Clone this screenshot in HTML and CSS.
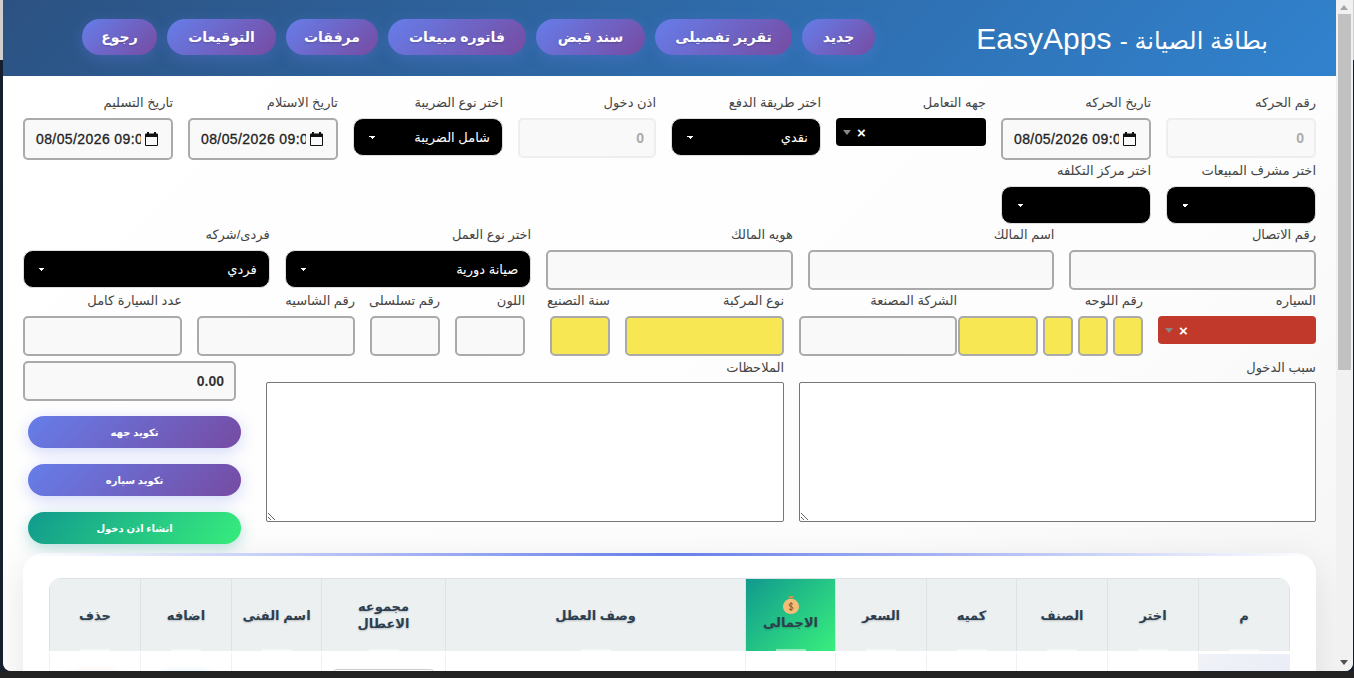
FILE: index.html
```html
<!DOCTYPE html>
<html lang="ar" dir="rtl">
<head>
  <meta charset="UTF-8" />
  <meta name="viewport" content="width=device-width, initial-scale=1.0"/>
  <title>بطاقة الصيانة</title>
  <link rel="stylesheet" href="styles.css">
</head>
<body>
  <div class="window">
    <!-- fake scrollbar, sits first because the page is rtl -->
    <div class="scrollbar">
      <div class="scroll-arrow scroll-up"></div>
      <div class="scroll-thumb"></div>
      <div class="scroll-arrow scroll-down"></div>
    </div>

    <div class="page">
      <div class="header">
        <h1><span class="title-ar">بطاقة الصيانة -</span> EasyApps</h1>
        <div class="header-buttons">
          <button class="nav-button nav-73">جديد</button>
          <button class="nav-button nav-137">تقرير تفصيلى</button>
          <button class="nav-button nav-109">سند قبض</button>
          <button class="nav-button nav-138">فاتوره مبيعات</button>
          <button class="nav-button nav-92">مرفقات</button>
          <button class="nav-button nav-109">التوقيعات</button>
          <button class="nav-button nav-75">رجوع</button>
        </div>
      </div>

      <div class="form">
        <div class="row row-top">
          <div class="field w-150"><label>رقم الحركه</label><input class="text-input is-disabled" value="0" disabled></div>
          <div class="field w-150"><label>تاريخ الحركه</label>
            <div class="date-box">
              <input class="date-text" value="08/05/2026 09:00">
              <svg class="date-icon" width="13" height="14" viewBox="0 0 13 14"><path d="M3 0V2M10 0V2" stroke="#111" stroke-width="2"/><path d="M.5 2H12.500V13.500H.5Z" fill="none" stroke="#111"/><path d="M1 2H12V5H1Z" fill="#111"/></svg>
            </div>
          </div>
          <div class="field w-150"><label>جهه التعامل</label>
            <div class="select2 select2-black"><span class="select2-arrow"></span><span class="select2-clear">×</span></div>
          </div>
          <div class="field w-150"><label>اختر طريقة الدفع</label><select class="black-select"><option>نقدي</option></select></div>
          <div class="field w-138"><label>اذن دخول</label><input class="text-input is-disabled" value="0" disabled></div>
          <div class="field w-150"><label>اختر نوع الضريبة</label><select class="black-select"><option>شامل الضريبة</option></select></div>
          <div class="field w-150"><label>تاريخ الاستلام</label>
            <div class="date-box">
              <input class="date-text" value="08/05/2026 09:00">
              <svg class="date-icon" width="13" height="14" viewBox="0 0 13 14"><path d="M3 0V2M10 0V2" stroke="#111" stroke-width="2"/><path d="M.5 2H12.500V13.500H.5Z" fill="none" stroke="#111"/><path d="M1 2H12V5H1Z" fill="#111"/></svg>
            </div>
          </div>
          <div class="field w-150"><label>تاريخ التسليم</label>
            <div class="date-box">
              <input class="date-text" value="08/05/2026 09:00">
              <svg class="date-icon" width="13" height="14" viewBox="0 0 13 14"><path d="M3 0V2M10 0V2" stroke="#111" stroke-width="2"/><path d="M.5 2H12.500V13.500H.5Z" fill="none" stroke="#111"/><path d="M1 2H12V5H1Z" fill="#111"/></svg>
            </div>
          </div>
        </div>

        <div class="row row-second">
          <div class="field w-150"><label>اختر مشرف المبيعات</label><select class="black-select"><option></option></select></div>
          <div class="field w-150"><label>اختر مركز التكلفه</label><select class="black-select"><option></option></select></div>
        </div>

        <div class="row-five">
          <div class="field"><label>رقم الاتصال</label><input class="text-input"></div>
          <div class="field"><label>اسم المالك</label><input class="text-input"></div>
          <div class="field"><label>هويه المالك</label><input class="text-input"></div>
          <div class="field"><label>اختر نوع العمل</label><select class="black-select"><option>صيانة دورية</option></select></div>
          <div class="field"><label>فردى/شركه</label><select class="black-select"><option>فردي</option></select></div>
        </div>

        <div class="row row-car">
          <div class="field w-158"><label>السياره</label>
            <div class="select2 select2-red"><span class="select2-arrow"></span><span class="select2-clear">×</span></div>
          </div>
          <div class="field"><label>رقم اللوحه</label>
            <div class="plate">
              <input class="text-input is-yellow w-30">
              <input class="text-input is-yellow w-30">
              <input class="text-input is-yellow w-30">
              <input class="text-input is-yellow w-80">
            </div>
          </div>
          <div class="field w-158 no-gap"><label>الشركة المصنعة</label><input class="text-input"></div>
          <div class="field w-159"><label>نوع المركبة</label><input class="text-input is-yellow"></div>
          <div class="field w-60"><label>سنة التصنيع</label><input class="text-input is-yellow"></div>
          <div class="field w-70 after-year"><label>اللون</label><input class="text-input"></div>
          <div class="field w-70"><label>رقم تسلسلى</label><input class="text-input"></div>
          <div class="field w-158"><label>رقم الشاسيه</label><input class="text-input"></div>
          <div class="field w-159"><label>عدد السيارة كامل</label><input class="text-input"></div>
        </div>

        <div class="row-notes">
          <div class="field note-517"><label>سبب الدخول</label><textarea class="note"></textarea></div>
          <div class="field note-518"><label>الملاحظات</label><textarea class="note"></textarea></div>
          <div class="side-col">
            <input class="text-input total-input" value="0.00">
            <button class="side-button">تكويد جهه</button>
            <button class="side-button">تكويد سياره</button>
            <button class="side-button side-button-green">انشاء اذن دخول</button>
          </div>
        </div>
      </div>

      <div class="table-card">
        <table class="parts-table">
          <thead>
            <tr>
              <th class="c-92">م</th>
              <th class="c-91">اختر</th>
              <th class="c-91">الصنف</th>
              <th class="c-90">كميه</th>
              <th class="c-91">السعر</th>
              <th class="c-90 total-head">
                <svg class="money-bag" width="16" height="19" viewBox="0 0 16 19">
                  <path d="M5.500 .5 7 1.500 8 .5 9 1.500 10.500 .5 10 3.500H6Z" fill="#d98f4e"/>
                  <path d="M5.500 4C2.500 5.500 0 8 0 11.500 0 16 3.500 19 8 19S16 16 16 11.500C16 8 13.500 5.500 10.500 4Z" fill="#f5bd78"/>
                  <path d="M10 9.500C9.600 8.800 8.800 8.500 8 8.500 6.900 8.500 6.100 9.100 6.100 10 6.100 12 10.100 11.200 10.100 13.200 10.100 14.200 9.100 14.800 8 14.800 7.100 14.800 6.300 14.400 5.900 13.700M8 7.200V16" fill="none" stroke="#8a5526" stroke-width="1"/>
                </svg>
                <span>الاجمالى</span>
              </th>
              <th class="c-300">وصف العطل</th>
              <th class="c-124">مجموعه<br>الاعطال</th>
              <th class="c-90">اسم الفنى</th>
              <th class="c-91">اضافه</th>
              <th class="c-91">حذف</th>
            </tr>
          </thead>
          <tbody>
            <tr>
              <td class="first-cell"></td><td></td><td></td><td></td><td></td><td></td><td></td>
              <td><div class="cell-select"></div></td>
              <td></td>
              <td><div class="cell-action cell-action-green"></div></td>
              <td><div class="cell-action cell-action-red"></div></td>
            </tr>
          </tbody>
        </table>
      </div>
    </div>
  </div>
</body>
</html>
```

FILE: styles.css
```css
* {
    margin: 0;
    padding: 0;
    box-sizing: border-box;
    font-family: 'Liberation Sans', 'DejaVu Sans', sans-serif;
}

html, body {
    height: 100%;
    overflow: hidden;
}

body {
    background: linear-gradient(#cfcfcf 60px, #14202e 60px, #14202e 670px, #232323 672px);
    padding: 0 1px 7px 3px;
}

.window {
    display: flex;
    height: 100%;
    background-color: #f1f1f1;
    border-radius: 0 0 8px 8px;
    overflow: hidden;
}

.scrollbar {
    flex: 0 0 17px;
    display: flex;
    flex-direction: column;
    background-color: #f1f1f1;
}

.scroll-arrow {
    height: 14px;
    position: relative;
}

.scroll-arrow::after {
    content: "";
    position: absolute;
    left: 4px;
    top: 5px;
    border-left: 4px solid transparent;
    border-right: 4px solid transparent;
}

.scroll-up::after {
    border-bottom: 5px solid #a3a3a3;
}

.scroll-down {
    height: 17px;
}

.scroll-down::after {
    top: 6px;
    border-top: 5px solid #505050;
}

.scroll-thumb {
    height: 356px;
    margin: 0 2px auto;
    background-color: #c1c1c1;
}

.page {
    flex: 1;
    min-width: 0;
    background: linear-gradient(135deg, #ffffff, #fdfdfd 70%, #f5f5f5);
    overflow: hidden;
    border-radius: 0 0 0 8px;
}

/* header */
.header {
    height: 76px;
    display: flex;
    align-items: center;
    justify-content: space-between;
    padding: 0 68px 0 79px;
    background: linear-gradient(135deg, #2c5282, #3182ce);
}

.header h1 {
    padding-top: 2px;
    font-size: 30px;
    font-weight: 400;
    color: white;
}

.title-ar {
    font-size: 24px;
}

.header-buttons {
    display: flex;
    gap: 10px;
    margin-top: -2px;
}

.nav-button {
    height: 36px;
    border: none;
    border-radius: 18px;
    background: linear-gradient(135deg, #667eea, #764ba2);
    box-shadow: 0 4px 15px rgba(102, 126, 234, 0.3);
    color: white;
    font-size: 14px;
    font-weight: 700;
    text-shadow: 0 1px 2px rgba(0, 0, 0, 0.2);
}

.nav-73 { width: 73px; }
.nav-75 { width: 75px; }
.nav-92 { width: 92px; }
.nav-109 { width: 109px; }
.nav-137 { width: 137px; }
.nav-138 { width: 138px; }

/* form */
.form {
    padding: 17px 20px 0 20px;
}

.row {
    display: flex;
    gap: 15px;
}

.row-top {
    height: 68px;
}

.row-second {
    height: 64px;
}

.row-five {
    display: grid;
    grid-template-columns: repeat(5, 1fr);
    gap: 15px;
    height: 66px;
}

.row-car {
    height: 66px;
}

.field {
    display: flex;
    flex-direction: column;
    min-width: 0;
}

.field label {
    height: 25px;
    font-size: 13px;
    line-height: 20px;
    color: #444;
    white-space: nowrap;
}

.w-30 { width: 30px; }
.w-60 { width: 60px; }
.w-70 { width: 70px; }
.w-80 { width: 80px; }
.w-138 { width: 138px; }
.w-150 { width: 150px; }
.w-158 { width: 158px; }
.w-159 { width: 159px; }

.no-gap {
    margin-right: -14px;
}

.after-year {
    margin-right: 10px;
}

.text-input {
    height: 40px;
    padding: 0 10px;
    border: 2px solid #aaa;
    border-radius: 5px;
    background-color: #f9f9f9;
    font-size: 14px;
    font-weight: 700;
    color: #333;
    outline: none;
}

.is-disabled {
    border-color: #eee;
    color: #aaa;
}

.is-yellow {
    background-color: #f7e752;
}

.date-box {
    display: flex;
    direction: ltr;
    align-items: center;
    gap: 4px;
    height: 42px;
    padding: 0 13px 0 11px;
    border: 2px solid #aaa;
    border-radius: 5px;
    background-color: #f9f9f9;
}

.date-text {
    flex: 1;
    min-width: 0;
    border: none;
    outline: none;
    background: none;
    font-size: 14px;
    letter-spacing: 0.4px;
    color: #222;
    -webkit-text-stroke: 0.3px #222;
}

.date-icon {
    flex: 0 0 13px;
}

.black-select {
    appearance: none;
    -webkit-appearance: none;
    width: 100%;
    height: 38px;
    padding: 0 12px;
    border: 1px solid #ddd;
    border-radius: 10px;
    background-color: black;
    background-image: linear-gradient(45deg, transparent 50%, white 50%), linear-gradient(135deg, white 50%, transparent 50%);
    background-position: 15px 17px, 18px 17px;
    background-size: 3px 3px;
    background-repeat: no-repeat;
    color: white;
    font-size: 13px;
    outline: none;
}

.select2 {
    display: flex;
    align-items: center;
    gap: 6px;
    height: 28px;
    padding: 0 7px;
    border-radius: 4px;
    flex-direction: row-reverse;
    justify-content: flex-start;
}

.select2-black {
    background-color: black;
}

.select2-red {
    background-color: #c0392b;
}

.select2-clear {
    color: white;
    font-size: 15px;
    font-weight: 700;
    line-height: 1;
}

.select2-arrow {
    border-left: 4px solid transparent;
    border-right: 4px solid transparent;
    border-top: 5px solid #888;
}

.plate {
    display: flex;
    gap: 5px;
}

.row-notes {
    display: flex;
    gap: 15px;
    align-items: flex-start;
    margin-top: 1px;
}

.note-517 {
    width: 517px;
}

.note-518 {
    width: 518px;
}

.row-notes label {
    height: 24px;
}

.note {
    height: 140px;
    border: 1px solid #767676;
    border-radius: 2px;
    background-color: white;
}

.side-col {
    width: 228px;
    display: flex;
    flex-direction: column;
    align-items: flex-end;
    margin-top: 3px;
}

.total-input {
    width: 213px;
    margin-bottom: 15px;
}

.side-button {
    width: 213px;
    height: 32px;
    margin: 0 0 16px 5px;
    border: none;
    border-radius: 16px;
    background: linear-gradient(135deg, #667eea, #764ba2);
    box-shadow: 0 4px 15px rgba(102, 126, 234, 0.3);
    color: white;
    font-size: 10px;
    font-weight: 700;
}

.side-button-green {
    background: linear-gradient(135deg, #11998e, #38ef7d);
    box-shadow: 0 4px 15px rgba(17, 153, 142, 0.3);
}

/* table */
.table-card {
    position: relative;
    margin: -7px 20px 0 20px;
    padding: 25px 26px;
    border-radius: 20px;
    background-color: white;
    box-shadow: 0 10px 40px rgba(0, 0, 0, 0.1);
    overflow: hidden;
}

.table-card::before {
    content: "";
    position: absolute;
    top: 0;
    left: 0;
    right: 0;
    height: 3px;
    background: linear-gradient(90deg, transparent, #667eea, transparent);
}

.parts-table {
    width: 1241px;
    table-layout: fixed;
    border-collapse: separate;
    border-spacing: 0;
    border-top: 1px solid #dee2e6;
    border-radius: 12px 12px 0 0;
    overflow: hidden;
}

.parts-table th {
    position: relative;
    height: 72px;
    background-color: #ecf0f1;
    border-left: 1px solid #dee2e6;
    color: #2c3e50;
    font-size: 13px;
    font-weight: 700;
    line-height: 17px;
    text-shadow: 0 1px 2px rgba(0, 0, 0, 0.2);
}

.parts-table th:first-child {
    border-right: 1px solid #dee2e6;
}

/* small light tick under each heading */
.parts-table th::after {
    content: "";
    position: absolute;
    bottom: 0;
    left: 50%;
    width: 30px;
    height: 2px;
    margin-left: -15px;
    background-color: rgba(255, 255, 255, 0.5);
}

.c-90 { width: 90px; }
.c-91 { width: 91px; }
.c-92 { width: 92px; }
.c-124 { width: 124px; }
.c-300 { width: 300px; }

.parts-table th.total-head {
    padding-bottom: 4px;
    background: linear-gradient(135deg, #11998e, #38ef7d);
}

.money-bag {
    display: block;
    margin: 0 auto;
}

.parts-table td {
    height: 50px;
    border-left: 1px solid #eef0f1;
    border-top: 3px solid white;
    vertical-align: top;
}

.first-cell {
    background: linear-gradient(135deg, #f0f2f8, #e9ecf6);
}

.cell-select {
    height: 30px;
    margin: 15px 10px 0;
    border: 1px solid #ccc;
    border-radius: 5px;
}

.cell-action {
    height: 30px;
    margin: 20px 20px 0;
    border-radius: 8px;
}

.cell-action-green {
    background-color: #e6f7f3;
    box-shadow: 0 0 10px rgba(17, 153, 142, 0.25);
}

.cell-action-red {
    background-color: #fdeee9;
    box-shadow: 0 0 10px rgba(255, 100, 80, 0.25);
}
```
